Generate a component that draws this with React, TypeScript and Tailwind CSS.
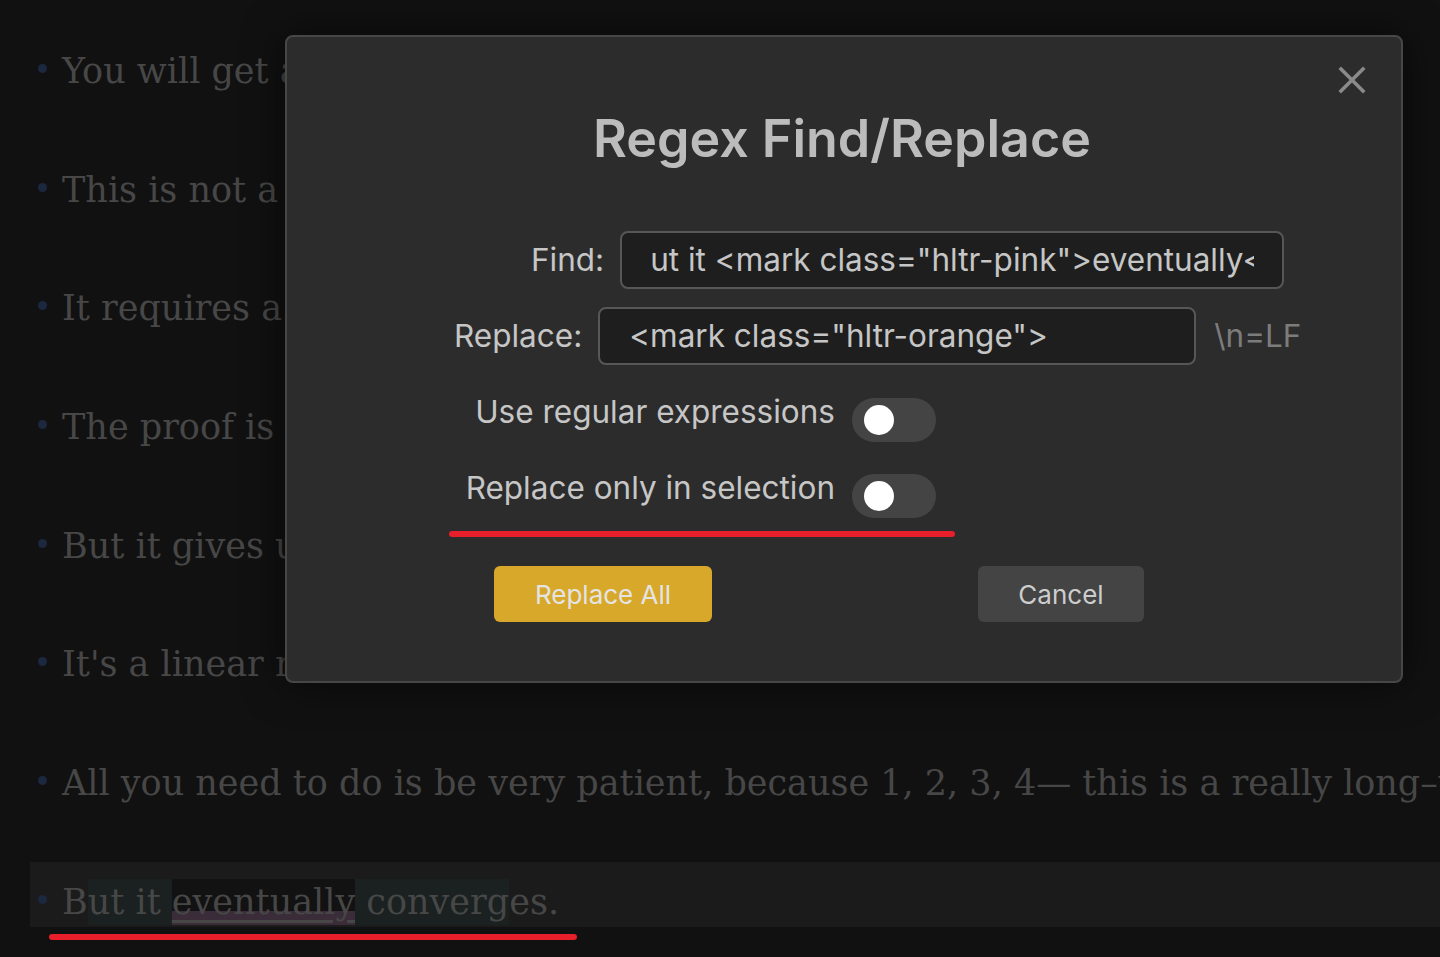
const lines = [
  'You will get a result after enough steps.',
  'This is not a fast method at all.',
  'It requires a lot of iterations.',
  'The proof is left as an exercise.',
  'But it gives us a simple algorithm.',
  "It's a linear recurrence in the end.",
]

function Bullet() {
  return <span className="mt-[33px] ml-[8px] mr-[15px] w-[9px] h-[9px] rounded-full bg-[#1c2740] shrink-0" />
}

function Toggle() {
  return (
    <div className="w-[84px] h-[44px] rounded-full bg-[#444444] flex items-center shrink-0">
      <span className="ml-[12px] w-[30px] h-[30px] rounded-full bg-white" />
    </div>
  )
}

function CloseIcon() {
  return (
    <svg viewBox="0 0 28 28" className="w-[28px] h-[28px]" fill="none" stroke="currentColor" strokeWidth={3.6} strokeLinecap="square">
      <path d="M3 3 L25 25 M25 3 L3 25" />
    </svg>
  )
}

function RegexModal() {
  return (
    <div className="absolute left-[285px] top-[35px] w-[1118px] h-[648px] rounded-[8px] border-2 border-[#474747] bg-[#2c2c2c] shadow-[0_0_40px_rgba(0,0,0,0.6)] font-['Inter',sans-serif]">
      <button className="absolute right-[35px] top-[29px] text-[#8a8a8a]">
        <CloseIcon />
      </button>

      <h2 className="pt-[72px] text-center text-[52px] leading-[60px] font-semibold text-[#bcbcbc] pr-[4px]">
        Regex Find/Replace
      </h2>

      <div className="mt-[62px] flex items-center pl-[244px] text-[31.5px] text-[#c6c6c6]">
        <span className="leading-none">Find:</span>
        <div className="ml-[16px] w-[664px] h-[58px] rounded-[8px] border-2 border-[#575757] bg-[#1e1e1e] flex items-center pl-[28px] pr-[28px]">
          <div className="overflow-hidden whitespace-nowrap">ut it &lt;mark class="hltr-pink"&gt;eventually&lt;/mark&gt;</div>
        </div>
      </div>

      <div className="mt-[18px] flex items-center pl-[167px] text-[31.5px] text-[#c6c6c6]">
        <span className="leading-none">Replace:</span>
        <div className="ml-[16px] w-[598px] h-[58px] rounded-[8px] border-2 border-[#575757] bg-[#1e1e1e] flex items-center pl-[29px] pr-[28px]">
          <div className="overflow-hidden whitespace-nowrap">&lt;mark class="hltr-orange"&gt;</div>
        </div>
        <span className="ml-[18px] text-[#7c7c7c] leading-none">\n=LF</span>
      </div>

      <div className="mt-[33px] flex flex-col gap-[32px] w-[649px] text-[31.5px] text-[#c6c6c6]">
        <div className="h-[44px] flex items-start justify-end">
          <span className="mr-[17px] leading-[28px]">Use regular expressions</span>
          <Toggle />
        </div>
        <div className="h-[44px] flex items-start justify-end">
          <span className="mr-[17px] leading-[28px]">Replace only in selection</span>
          <Toggle />
        </div>
      </div>

      <div className="mt-[48px] flex items-center text-[26px]">
        <button className="ml-[207px] w-[218px] h-[56px] rounded-[6px] bg-[#d8a82a] text-[#e4e4e4]">Replace All</button>
        <button className="ml-[266px] w-[166px] h-[56px] rounded-[6px] bg-[#444444] text-[#cdcdcd]">Cancel</button>
      </div>
    </div>
  )
}

export default function App() {
  return (
    <div className="relative w-[1440px] h-[957px] overflow-hidden bg-[#111111] font-['DejaVu_Serif',serif] text-[35px] text-[#474747]">
      <div className="flex flex-col gap-[53.7px] pt-[31px]">
        {lines.map((t) => (
          <div key={t} className="ml-[30px] h-[65px] flex whitespace-nowrap">
            <Bullet />
            <span className="pt-[19px] leading-[42px]">{t}</span>
          </div>
        ))}
        <div className="ml-[30px] h-[65px] flex whitespace-nowrap">
          <Bullet />
          <span className="pt-[19px] leading-[42px]">
            All you need to do is be very patient, because 1, 2, 3, 4— this is a really long–winded way
          </span>
        </div>
        <div className="ml-[30px] h-[65px] flex whitespace-nowrap bg-[#1b1b1b]">
          <Bullet />
          <span className="pt-[19px] leading-[42px]">
            B
            <span className="bg-[#1a2120] py-[3px]">ut it </span>
            <span className="bg-[linear-gradient(to_bottom,#121212_70%,#3a2d39_70%)] py-[3px] underline decoration-[#474747] underline-offset-[6px]">eventually</span>
            <span className="bg-[#1a2120] py-[3px]"> converg</span>
            es.
          </span>
        </div>
      </div>

      <RegexModal />

      <div className="absolute left-[449px] top-[531px] w-[506px] h-[6px] rounded-full bg-[#e81e2a]" />
      <div className="absolute left-[49px] top-[934px] w-[528px] h-[6px] rounded-full bg-[#e81e2a]" />
    </div>
  )
}
